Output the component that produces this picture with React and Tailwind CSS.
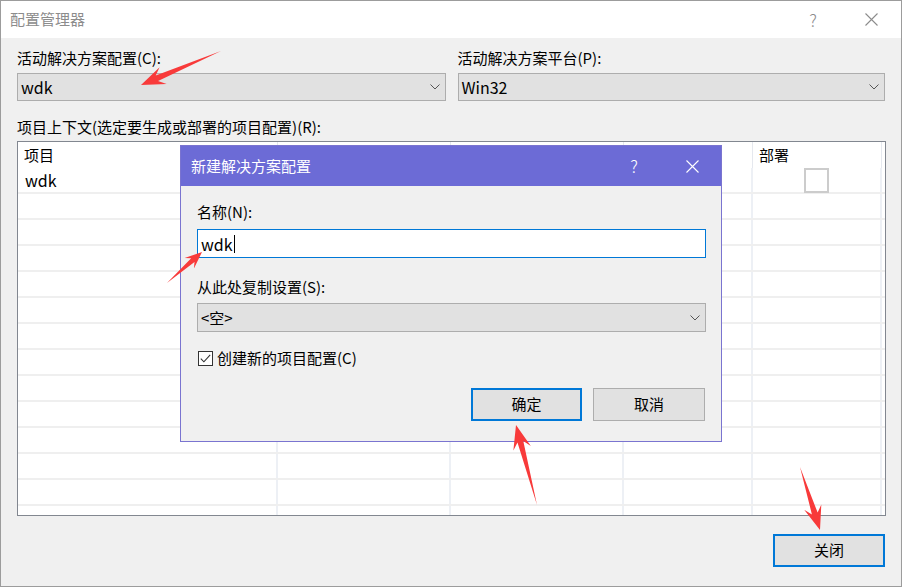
import React from 'react';

const FONT = { fontFamily: '"Noto Sans CJK SC", "Microsoft YaHei", sans-serif' };

const Chevron = () => (
  <svg width="10" height="6" viewBox="0 0 10 6" className="shrink-0">
    <path d="M0.5 0.5 L5 5 L9.5 0.5" fill="none" stroke="#555" strokeWidth="1" />
  </svg>
);

const CloseX = ({ color, size = 13 }) => (
  <svg width={size} height={size} viewBox="0 0 13 13">
    <path d="M0.5 0.5 L12.5 12.5 M12.5 0.5 L0.5 12.5" stroke={color} strokeWidth="1.1" fill="none" />
  </svg>
);

const Combo = ({ value, className = '' }) => (
  <div className={`h-[28px] flex items-center justify-between bg-[#e1e1e1] border border-[#adadad] pl-[3px] pr-[5px] ${className}`}>
    <span className="text-[16px] leading-none text-black">{value}</span>
    <Chevron />
  </div>
);

// red annotation arrows: tail -> tip
const arrows = [
  { x1: 219, y1: 49, x2: 139, y2: 83, hl: 24, hw: 9, sw: 6 },
  { x1: 165, y1: 281, x2: 200, y2: 250, hl: 17, hw: 7, sw: 5 },
  { x1: 535, y1: 503, x2: 514, y2: 423, hl: 24, hw: 9, sw: 6 },
  { x1: 798, y1: 465, x2: 818, y2: 528, hl: 24, hw: 9, sw: 6 },
];

const arrowPoints = ({ x1, y1, x2, y2, hl, hw, sw }) => {
  const dx = x2 - x1;
  const dy = y2 - y1;
  const L = Math.hypot(dx, dy);
  const ux = dx / L;
  const uy = dy / L;
  const nx = -uy;
  const ny = ux;
  const bx = x2 - ux * hl;
  const by = y2 - uy * hl;
  const jx = x2 - ux * hl * 0.72;
  const jy = y2 - uy * hl * 0.72;
  const pts = [
    [x1, y1],
    [jx + (nx * sw) / 2, jy + (ny * sw) / 2],
    [bx + nx * hw, by + ny * hw],
    [x2, y2],
    [bx - nx * hw, by - ny * hw],
    [jx - (nx * sw) / 2, jy - (ny * sw) / 2],
  ];
  return pts.map((p) => p.join(',')).join(' ');
};

const cols = [260, 173, 173, 129, 129];

const App = () => {
  const rows = Array.from({ length: 14 });
  return (
    <div className="relative w-[902px] h-[587px] bg-[#f0f0f0] border border-[#9c9c9c] flex flex-col overflow-hidden" style={FONT}>
      {/* title bar */}
      <div className="h-[37px] bg-white flex items-center shrink-0">
        <span className="pl-[9px] text-[15px] text-[#8c8c8c]">配置管理器</span>
        <div className="ml-auto flex items-center">
          <span className="w-[58px] text-center text-[17px] text-[#8c8c8c] font-light">?</span>
          <span className="w-[58px] flex justify-center mr-[1px]">
            <CloseX color="#8c8c8c" />
          </span>
        </div>
      </div>

      {/* body */}
      <div className="flex flex-col px-[16px] pt-[10px]">
        <div className="flex gap-[12px]">
          <div className="w-[429px] flex flex-col">
            <div className="h-[20px] text-[15px] leading-[20px] text-black">活动解决方案配置(C):</div>
            <Combo value="wdk" className="mt-[5px]" />
          </div>
          <div className="w-[428px] flex flex-col">
            <div className="h-[20px] text-[15px] leading-[20px] text-black">活动解决方案平台(P):</div>
            <Combo value="Win32" className="mt-[5px]" />
          </div>
        </div>

        <div className="mt-[16px] h-[20px] text-[15px] leading-[20px] text-black">项目上下文(选定要生成或部署的项目配置)(R):</div>

        {/* grid */}
        <div className="mt-[4px] w-[869px] h-[375px] border border-[#828790] bg-white overflow-hidden">
          <div className="flex h-[26px]">
            {cols.map((w, i) => (
              <div key={i} style={{ width: w }} className="h-full border-r border-[#e5e8ee] flex items-center pl-[6px] text-[15px] text-black">
                {i === 0 ? '项目' : i === 4 ? '部署' : ''}
              </div>
            ))}
          </div>
          {rows.map((_, r) => (
            <div key={r} className="flex h-[26px] border-b-2 border-[#efefef]">
              {cols.map((w, i) => (
                <div key={i} style={{ width: w }} className="h-full border-r-2 border-[#edf0f5] flex items-center justify-start">
                  {r === 0 && i === 0 && <span className="pl-[7px] text-[16px] text-black">wdk</span>}
                  {r === 0 && i === 4 && (
                    <div className="mx-auto w-[25px] h-[25px] border-2 border-[#cccccc] bg-white" />
                  )}
                </div>
              ))}
            </div>
          ))}
        </div>

        <div className="flex justify-end mt-[18px]">
          <button className="w-[112px] h-[33px] bg-[#e1e1e1] border-2 border-[#0078d7] text-[15px] text-black">关闭</button>
        </div>
      </div>

      {/* modal dialog */}
      <div className="absolute left-[179px] top-[144px] w-[542px] h-[297px] border border-[#7a74d0] bg-[#f0f0f0] flex flex-col">
        <div className="h-[40px] bg-[#6c6bd6] flex items-center shrink-0">
          <span className="pl-[10px] text-[15px] text-white">新建解决方案配置</span>
          <div className="ml-auto flex items-center">
            <span className="w-[58px] text-center text-[17px] text-white font-light">?</span>
            <span className="w-[58px] flex justify-center">
              <CloseX color="#ffffff" />
            </span>
          </div>
        </div>
        <div className="flex flex-col pl-[16px] pr-[15px] pt-[16px]">
          <div className="h-[20px] text-[15px] leading-[20px] text-black">名称(N):</div>
          <div className="mt-[7px] h-[29px] bg-white border border-[#0078d7] flex items-center pl-[3px]">
            <span className="text-[16px] text-black leading-none">wdk</span>
            <span className="w-[1px] h-[18px] bg-black ml-[1px]" />
          </div>
          <div className="mt-[19px] h-[20px] text-[15px] leading-[20px] text-black">从此处复制设置(S):</div>
          <div className="mt-[6px] h-[29px] flex items-center justify-between bg-[#e1e1e1] border border-[#adadad] pl-[3px] pr-[5px]">
            <span className="text-[15px] text-black leading-none">&lt;空&gt;</span>
            <Chevron />
          </div>
          <div className="mt-[18px] flex items-center h-[16px]">
            <div className="w-[15px] h-[15px] border border-[#333] bg-white flex items-center justify-center ml-[1px]">
              <svg width="11" height="9" viewBox="0 0 11 9">
                <path d="M0.8 4.6 L3.9 7.8 L10.2 0.8" fill="none" stroke="#333" strokeWidth="1.1" />
              </svg>
            </div>
            <span className="ml-[4px] text-[15px] text-black">创建新的项目配置(C)</span>
          </div>
          <div className="mt-[22px] flex justify-end gap-[11px] pr-[1px]">
            <button className="w-[111px] h-[33px] bg-[#e1e1e1] border-2 border-[#0078d7] text-[15px] text-black">确定</button>
            <button className="w-[112px] h-[33px] bg-[#e1e1e1] border border-[#adadad] text-[15px] text-black">取消</button>
          </div>
        </div>
      </div>

      {/* annotation arrows */}
      <svg className="absolute left-0 top-0 pointer-events-none" width="902" height="587" viewBox="-1 -1 902 587">
        {arrows.map((a, i) => (
          <polygon key={i} points={arrowPoints(a)} fill="#f83a3a" />
        ))}
      </svg>
    </div>
  );
};

export default App;
